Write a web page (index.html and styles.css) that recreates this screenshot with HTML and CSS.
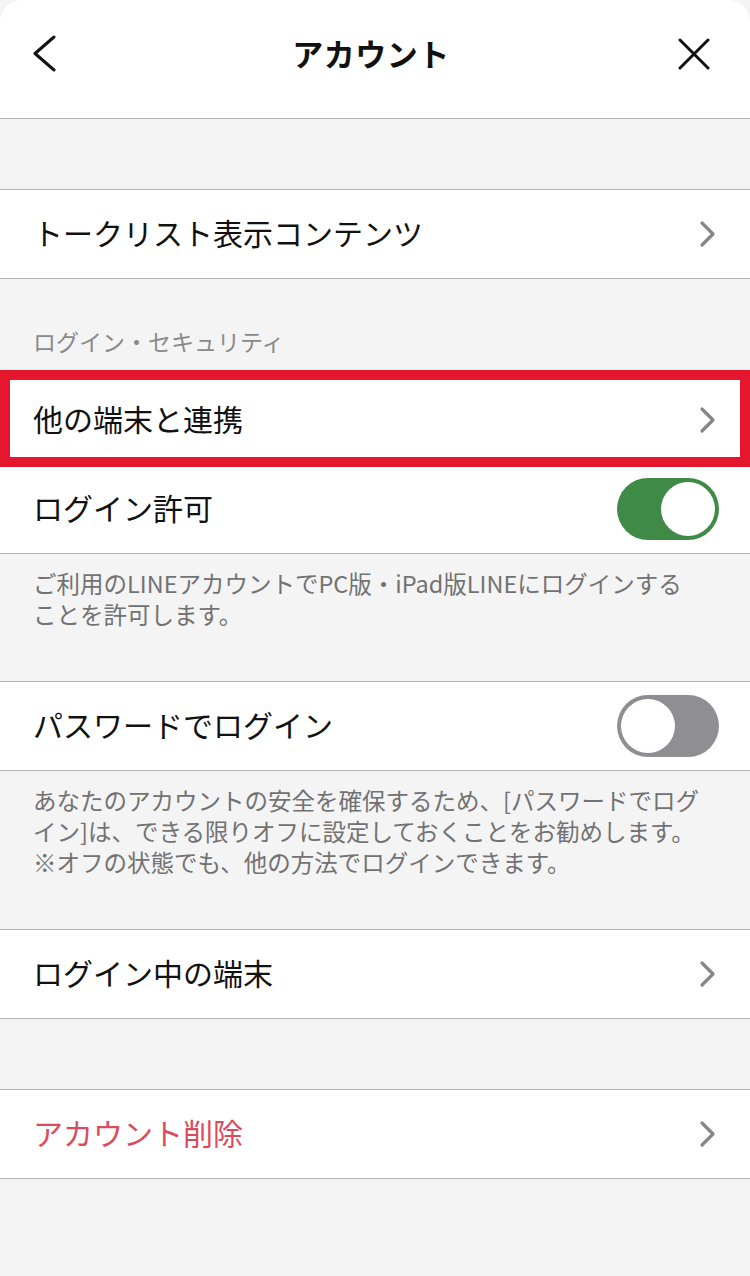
FILE: index.html
```html
<!DOCTYPE html>
<html lang="ja">
<head>
  <meta charset="UTF-8" />
  <meta name="viewport" content="width=device-width, initial-scale=1.0"/>
  <title>アカウント</title>
  <link rel="stylesheet" href="styles.css">
</head>
<body>

  <header class="topbar">
    <svg class="back" width="26" height="38" viewBox="0 0 26 38">
      <path d="M22 2 L3 18.5 L22 35" fill="none" stroke="#111" stroke-width="3" stroke-linecap="round" stroke-linejoin="round"/>
    </svg>
    <h1>アカウント</h1>
    <svg class="close" width="32" height="32" viewBox="0 0 32 32">
      <path d="M2 2 L30 30 M30 2 L2 30" fill="none" stroke="#111" stroke-width="3" stroke-linecap="round"/>
    </svg>
  </header>

  <main>
    <div class="spacer"></div>

    <div class="group">
      <div class="row">
        <span class="label">トークリスト表示コンテンツ</span>
        <svg class="chev" width="20" height="28" viewBox="0 0 20 28"><path d="M4 3 L15 14 L4 25" /></svg>
      </div>
    </div>

    <div class="section-label">ログイン・セキュリティ</div>

    <div class="group">
      <div class="row highlight">
        <span class="label">他の端末と連携</span>
        <svg class="chev" width="20" height="28" viewBox="0 0 20 28"><path d="M4 3 L15 14 L4 25" /></svg>
      </div>
      <div class="row">
        <span class="label">ログイン許可</span>
        <div class="toggle on"><div class="knob"></div></div>
      </div>
    </div>

    <p class="note">ご利用のLINEアカウントでPC版・iPad版LINEにログインする<br>ことを許可します。</p>

    <div class="group">
      <div class="row">
        <span class="label">パスワードでログイン</span>
        <div class="toggle"><div class="knob"></div></div>
      </div>
    </div>

    <p class="note">あなたのアカウントの安全を確保するため、[パスワードでログ<br>イン]は、できる限りオフに設定しておくことをお勧めします。<br>※オフの状態でも、他の方法でログインできます。</p>

    <div class="group">
      <div class="row">
        <span class="label">ログイン中の端末</span>
        <svg class="chev" width="20" height="28" viewBox="0 0 20 28"><path d="M4 3 L15 14 L4 25" /></svg>
      </div>
    </div>

    <div class="spacer"></div>

    <div class="group">
      <div class="row">
        <span class="label danger">アカウント削除</span>
        <svg class="chev" width="20" height="28" viewBox="0 0 20 28"><path d="M4 3 L15 14 L4 25" /></svg>
      </div>
    </div>
  </main>

</body>
</html>
```

FILE: styles.css
```css
body {
  background-color: #f4f4f4;
  font-family: "Noto Sans CJK JP", "Noto Sans", sans-serif;
  margin: 0;
  padding: 0;
  color: #111;
}

.topbar {
  background-color: #fff;
  border-radius: 22px 22px 0 0;
  border-bottom: 1px solid #b4b4b4;
  height: 119px;
  box-sizing: border-box;
  padding: 0 40px 10px 32px;
  display: flex;
  align-items: center;
  justify-content: space-between;
}

.topbar h1 {
  margin: 0 0 4px;
  font-size: 31px;
  font-weight: bold;
  letter-spacing: 0.5px;
  padding-left: 6px;
}

.spacer {
  height: 70px;
}

.group {
  background-color: #fff;
  border-top: 1px solid #b4b4b4;
  border-bottom: 1px solid #b4b4b4;
}

.row {
  position: relative;
  height: 88px;
  padding: 0 32px 0 33px;
  display: flex;
  align-items: center;
  justify-content: space-between;
}

.row + .row {
  border-top: 1px solid #b4b4b4;
}

.label {
  font-size: 30px;
  line-height: 1;
  margin-bottom: 5px;
}

.label.danger {
  color: #dc4a5d;
}

.chev path {
  fill: none;
  stroke: #86868a;
  stroke-width: 3.2;
  stroke-linecap: round;
  stroke-linejoin: round;
}

/* red marker drawn over the row */
.highlight::after {
  content: "";
  position: absolute;
  top: -6px;
  bottom: -3px;
  left: 0;
  right: 0;
  border: 10px solid #e4172f;
  z-index: 2;
}

.section-label {
  padding: 47px 33px 19px;
  font-size: 23px;
  line-height: 30px;
  color: #8a8a8a;
}

.note {
  margin: 0;
  padding: 14px 30px 51px 33px;
  font-size: 23.5px;
  line-height: 31px;
  color: #727272;
}

.toggle {
  width: 102px;
  height: 62px;
  border-radius: 31px;
  background-color: #8e8e93;
  box-sizing: border-box;
  padding: 4px;
  display: flex;
  margin-right: -1px;
}

.toggle.on {
  background-color: #3f8a46;
  justify-content: flex-end;
}

.knob {
  width: 54px;
  height: 54px;
  border-radius: 50%;
  background-color: #fff;
}
```
